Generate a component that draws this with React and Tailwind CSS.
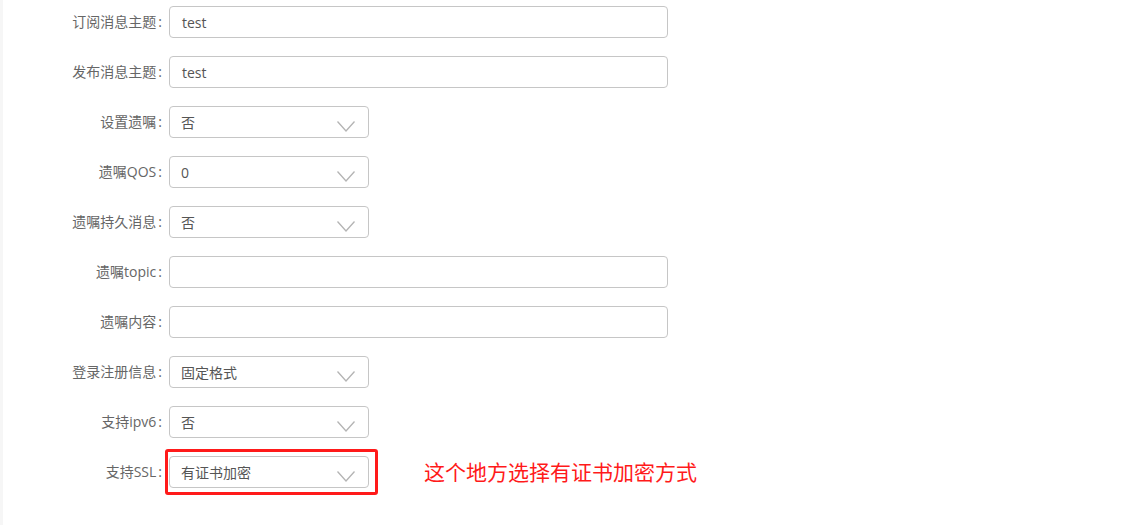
import React from 'react';

const font = { fontFamily: '"Open Sans", "Noto Sans CJK SC", sans-serif' };

const rows = [
  { label: '订阅消息主题', type: 'input', value: 'test' },
  { label: '发布消息主题', type: 'input', value: 'test' },
  { label: '设置遗嘱', type: 'select', value: '否' },
  { label: '遗嘱QOS', type: 'select', value: '0' },
  { label: '遗嘱持久消息', type: 'select', value: '否' },
  { label: '遗嘱topic', type: 'input', value: '' },
  { label: '遗嘱内容', type: 'input', value: '' },
  { label: '登录注册信息', type: 'select', value: '固定格式' },
  { label: '支持ipv6', type: 'select', value: '否' },
  { label: '支持SSL', type: 'select', value: '有证书加密', mark: true },
];

function Chevron() {
  return (
    <svg width="18" height="11" viewBox="0 0 18 11" className="absolute right-[13px] top-[14px]">
      <polyline points="0.5,0.5 9,10 17.5,0.5" fill="none" stroke="#b4b4b4" strokeWidth="1.3" />
    </svg>
  );
}

function Field({ row }) {
  if (row.type === 'input') {
    return (
      <div className="w-[499px] h-[32px] border border-[#c6c6c6] rounded-[4px] px-[12px] flex items-center text-[14px] text-[#555]">
        {row.value}
      </div>
    );
  }
  return (
    <div className="relative w-[200px] h-[32px] border border-[#c6c6c6] rounded-[4px] px-[11px] flex items-center text-[14px] text-[#555]">
      {row.value}
      <Chevron />
      {row.mark && (
        <div className="absolute left-[-5px] top-[-8px] w-[213px] h-[46px] border-[3px] border-[#ff1a1a] rounded-[3px]" />
      )}
    </div>
  );
}

export default function App() {
  return (
    <div className="w-[1144px] h-[525px] bg-white border-l-[3px] border-[#f6f6f6] overflow-hidden" style={font}>
      <div className="pt-[6px] flex flex-col gap-[18px]">
        {rows.map((row, i) => (
          <div key={i} className="flex items-center h-[32px]">
            <div className="w-[159px] text-right text-[14px] text-[#666] leading-none">
              {row.label}<span className="ml-[2px]">:</span>
            </div>
            <div className="ml-[7px]">
              <Field row={row} />
            </div>
            {row.mark && (
              <div className="ml-[55px] text-[21px] text-[#ff1a1a] leading-none">这个地方选择有证书加密方式</div>
            )}
          </div>
        ))}
      </div>
    </div>
  );
}
